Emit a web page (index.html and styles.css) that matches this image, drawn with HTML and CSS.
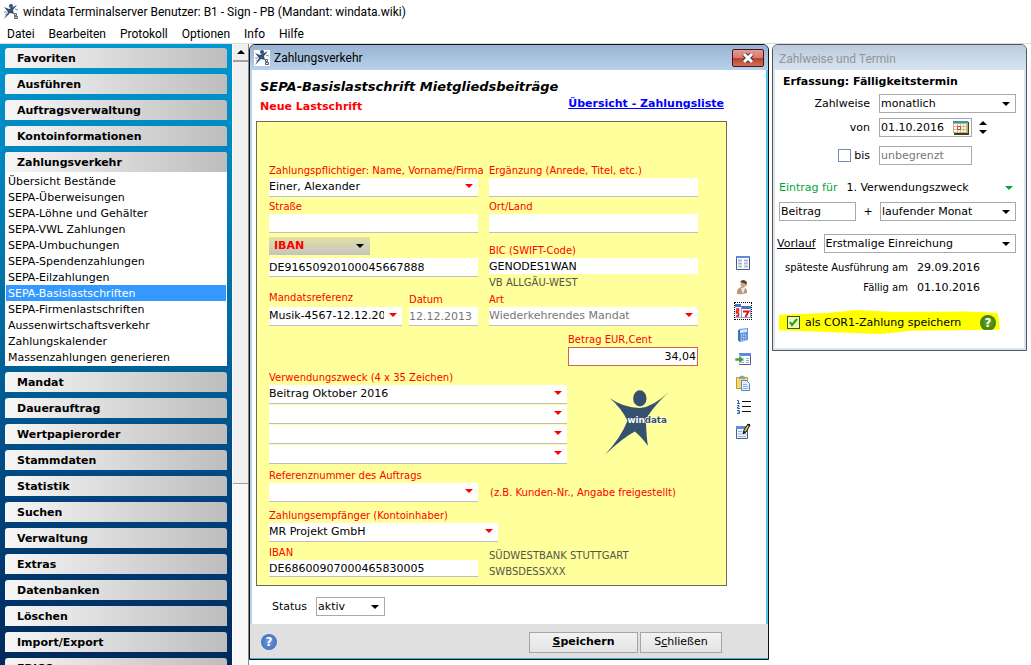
FILE: index.html
```html
<!DOCTYPE html>
<html lang="de">
<head>
<meta charset="utf-8">
<title>windata Terminalserver</title>
<link rel="stylesheet" href="styles.css">
</head>
<body>
<svg class="defs" aria-hidden="true">
  <symbol id="man" viewBox="370 55 200 200">
    <ellipse cx="480" cy="83" rx="20" ry="24"/>
    <path d="M390 82Q430 111 480 112Q522 107 567 63Q506 122 498 150Q500 200 504 225Q485 198 465 182Q430 200 375 252Q424 200 443 150Q425 112 390 82Z"/>
  </symbol>
  <symbol id="app" viewBox="0 0 16 16">
    <path d="M1 3L6 5L14 1L10 6L11 10L7 9L1 15L5 8Z" fill="#36506f"/>
    <circle cx="8" cy="2" r="2" fill="#36506f"/>
    <path d="M1 8h3M2 11l3-2M12 5l3 1" stroke="#7f94aa"/>
    <path d="M11.500 9.500h2v2h-2zM11.500 12.500h3v2h-3z" fill="#dce8ee" stroke="#50666f"/>
  </symbol>
</svg>

<header class="titlebar">
  <svg class="app-icon"><use href="#app"/></svg>
  <span>windata Terminalserver Benutzer: B1 - Sign - PB (Mandant: windata.wiki)</span>
</header>
<nav class="menubar">
  <button>Datei</button><button>Bearbeiten</button><button>Protokoll</button><button>Optionen</button><button>Info</button><button>Hilfe</button>
</nav>

<main class="main">
  <aside class="sidebar">
    <button class="group">Favoriten</button>
    <button class="group">Ausführen</button>
    <button class="group">Auftragsverwaltung</button>
    <button class="group">Kontoinformationen</button>
    <section class="open">
      <button class="group">Zahlungsverkehr</button>
      <ul class="links">
        <li><a href="#">Übersicht Bestände</a></li>
        <li><a href="#">SEPA-Überweisungen</a></li>
        <li><a href="#">SEPA-Löhne und Gehälter</a></li>
        <li><a href="#">SEPA-VWL Zahlungen</a></li>
        <li><a href="#">SEPA-Umbuchungen</a></li>
        <li><a href="#">SEPA-Spendenzahlungen</a></li>
        <li><a href="#">SEPA-Eilzahlungen</a></li>
        <li><a href="#" class="current">SEPA-Basislastschriften</a></li>
        <li><a href="#">SEPA-Firmenlastschriften</a></li>
        <li><a href="#">Aussenwirtschaftsverkehr</a></li>
        <li><a href="#">Zahlungskalender</a></li>
        <li><a href="#">Massenzahlungen generieren</a></li>
      </ul>
    </section>
    <button class="group">Mandat</button>
    <button class="group">Dauerauftrag</button>
    <button class="group">Wertpapierorder</button>
    <button class="group">Stammdaten</button>
    <button class="group">Statistik</button>
    <button class="group">Suchen</button>
    <button class="group">Verwaltung</button>
    <button class="group">Extras</button>
    <button class="group">Datenbanken</button>
    <button class="group">Löschen</button>
    <button class="group">Import/Export</button>
    <button class="group">EBICS</button>
  </aside>
  <div class="scrollbar">
    <button class="scroll-up" aria-label="Nach oben"></button>
    <div class="thumb"></div>
  </div>

  <div class="workspace">
    <section class="dialog">
      <header class="dialog-title">
        <svg class="app-icon boxed"><use href="#app"/></svg>
        <span>Zahlungsverkehr</span>
        <button class="close" aria-label="Fenster schließen">
          <svg width="12" height="10" viewBox="0 0 12 10"><path d="M2 1L10 9M10 1L2 9" stroke="#54303a" stroke-width="5"/><path d="M2 1L10 9M10 1L2 9" stroke="#fff" stroke-width="3"/></svg>
        </button>
      </header>
      <div class="dialog-head">
        <div>
          <h1>SEPA-Basislastschrift Mietgliedsbeiträge</h1>
          <p class="new">Neue Lastschrift</p>
        </div>
        <a href="#" class="overview">Übersicht - Zahlungsliste</a>
      </div>

      <div class="dialog-body">
        <form class="form">
          <div class="pair">
            <div class="field"><label for="name">Zahlungspflichtiger: Name, Vorname/Firma</label><select id="name" class="line"><option>Einer, Alexander</option></select></div>
            <div class="field"><label for="erg">Ergänzung (Anrede, Titel, etc.)</label><input id="erg" class="line"></div>
          </div>
          <div class="pair">
            <div class="field"><label for="str">Straße</label><input id="str" class="line"></div>
            <div class="field"><label for="ort">Ort/Land</label><input id="ort" class="line"></div>
          </div>
          <div class="pair bank">
            <div class="field"><select class="kind" aria-label="Kontoart"><option>IBAN</option></select><input class="line" aria-label="IBAN" value="DE91650920100045667888"></div>
            <div class="field bic"><label for="bic">BIC (SWIFT-Code)</label><input id="bic" class="line plain" value="GENODES1WAN"><span class="info">VB ALLGÄU-WEST</span></div>
          </div>
          <div class="pair mandate">
            <div class="split">
              <div class="field ref"><label for="ref">Mandatsreferenz</label><select id="ref" class="line"><option>Musik-4567-12.12.2013</option></select></div>
              <div class="field date"><label for="dat">Datum</label><input id="dat" class="line muted" value="12.12.2013"></div>
            </div>
            <div class="field"><label for="art">Art</label><select id="art" class="line muted"><option>Wiederkehrendes Mandat</option></select></div>
          </div>
          <div class="amount field"><label for="betrag">Betrag EUR,Cent</label><input id="betrag" value="34,04"></div>
          <div class="purpose">
            <div class="field lines">
              <label for="vz">Verwendungszweck (4 x 35 Zeichen)</label>
              <select id="vz" class="line"><option>Beitrag Oktober 2016</option></select>
              <select class="line" aria-label="Zeile 2"><option></option></select>
              <select class="line" aria-label="Zeile 3"><option></option></select>
              <select class="line" aria-label="Zeile 4"><option></option></select>
            </div>
            <svg class="logo" viewBox="370 55 200 200" role="img" aria-label="windata">
              <use href="#man" x="370" y="55" width="200" height="200" fill="#36506f"/>
              <text x="443" y="158"><tspan class="win">win</tspan><tspan>data</tspan></text>
            </svg>
          </div>
          <div class="pair">
            <div class="field"><label for="nr">Referenznummer des Auftrags</label><select id="nr" class="line"><option></option></select></div>
            <p class="hint">(z.B. Kunden-Nr., Angabe freigestellt)</p>
          </div>
          <div class="field owner"><label for="inh">Zahlungsempfänger (Kontoinhaber)</label><select id="inh" class="line"><option>MR Projekt GmbH</option></select></div>
          <div class="pair last">
            <div class="field"><label for="iban2">IBAN</label><input id="iban2" class="line low" value="DE68600907000465830005"></div>
            <p class="info">SÜDWESTBANK STUTTGART<br>SWBSDESSXXX</p>
          </div>
        </form>

        <div class="tools">
          <button aria-label="Tabelle"><svg viewBox="0 0 16 16"><path d="M1.500 1.500h13v13h-13z" fill="#fff" stroke="#41597f"/><path d="M1 1h14v2H1z" fill="#5d8be0"/><path d="M3 5.500h4M3 8.500h4M3 11.500h4M9 5.500h4M9 8.500h4M9 11.500h4" stroke="#a9bbd4" stroke-width="2"/></svg></button>
          <button aria-label="Person"><svg viewBox="0 0 16 16"><path d="M2 15q-1-5 4-7q7 0 6 6q-5 2-10 1z" fill="#b99b78"/><path d="M6 9l2 6 2-6z" fill="#eee"/><ellipse cx="8" cy="5" rx="2.500" ry="3.500" fill="#d9a57a"/><path d="M5 3q3-4 7 0l-1 5q0-4-3-4z" fill="#5b4434"/></svg></button>
          <button aria-label="Kalender" class="focus"><svg viewBox="0 0 16 16"><path d="M0 3h16v12H0z" fill="#fff"/><path d="M0 1h6v3H0zM6 3h10v3H6z" fill="#4873c4"/><path d="M6.500 4v11M15.500 5v10M0 14.500h16" stroke="#88a4d4"/><path d="M1 6h2.500v2H1.500v2h2v3H1" fill="none" stroke="#e8141c" stroke-width="1.500"/><path d="M8 8.500h5.500L10.500 14" fill="none" stroke="#e8141c" stroke-width="2"/></svg></button>
          <button aria-label="Rechner"><svg viewBox="0 0 16 16"><path d="M4 2l9-1v12l-8 2-2-2z" fill="#6896dc"/><path d="M5 3l7-1v3l-7 1z" fill="#d2e8ff"/><path d="M6 8h6M6 10.500h6M6 13h5" stroke="#dceaff" stroke-dasharray="1 1"/><path d="M3 3v10l2 2V3z" fill="#3e6fbd"/></svg></button>
          <button aria-label="Einfügen in Tabelle"><svg viewBox="0 0 16 16"><path d="M4.500 2.500h11v11h-11z" fill="#fff" stroke="#48618c"/><path d="M4 2h12v3H4z" fill="#5d8be0"/><path d="M6 7.500h3M11 7.500h3M6 9.500h3M11 9.500h3M6 11.500h3M11 11.500h3" stroke="#9eb2d0"/><path d="M0 7h4V4l5 4.500L4 13v-3H0z" fill="#4b9c48" stroke="#fff" stroke-width=".6"/></svg></button>
          <button aria-label="Zwischenablage"><svg viewBox="0 0 16 16"><path d="M1.500 2.500h11v11h-11z" fill="#f5d86b" stroke="#c49a29"/><path d="M4 2q3-3 6 0v2H4z" fill="#8ba0bd"/><path d="M6.500 5.500h5l3 3v7h-8z" fill="#e4f0ff" stroke="#5a85c5"/><path d="M8 9.500h4M8 11.500h5M8 13.500h5" stroke="#8fb1e3"/></svg></button>
          <button aria-label="Nummerierte Liste"><svg viewBox="0 0 16 16"><path d="M7 2.500h9M7 7.500h9M7 12.500h9" stroke="#111"/><path d="M2 1.500h1.500V4M2 4.500h3M2 6.500h2V8H2.500v1.500H5M2 11.500h2.500v3H2M2.500 13h2" fill="none" stroke="#3562ad"/></svg></button>
          <button aria-label="Notiz bearbeiten"><svg viewBox="0 0 16 16"><path d="M1.500 3.500h11v12h-11z" fill="#eef4ff" stroke="#48618c"/><path d="M1 3h12v3H1z" fill="#5d8be0"/><path d="M3 8.500h4M3 11h4M9 11h3M3 13.500h8" stroke="#9eb2d0"/><path d="M8 11l1-4 4-6 2 1-4 7z" fill="#e8c53c" stroke="#111"/><path d="M8 11l1-3 2 1zM12 1h3v3z" fill="#111"/></svg></button>
        </div>
      </div>

      <div class="status"><label for="status">Status</label><select id="status" class="box"><option>aktiv</option></select></div>
      <footer class="dialog-foot">
        <button class="help blue" aria-label="Hilfe">?</button>
        <button class="btn main-btn"><span><u>S</u>peichern</span></button>
        <button class="btn"><span>S<u>c</u>hließen</span></button>
      </footer>
    </section>

    <section class="panel">
      <header class="panel-title">Zahlweise und Termin</header>
      <form class="panel-body">
        <h2>Erfassung: Fälligkeitstermin</h2>
        <div class="grid">
          <label for="zw">Zahlweise</label><select id="zw" class="box"><option>monatlich</option></select>
          <label for="von">von</label>
          <div class="from">
            <div class="datebox"><input id="von" value="01.10.2016"><svg width="16" height="14" viewBox="0 0 16 14"><path d="M1 1h15v13H1z" fill="#3d3c20"/><path d="M0 0h15v12H0z" fill="#bdb878"/><path d="M0 0h15v2H0z" fill="#3f8fbd"/><path d="M1 3h12v8H1z" fill="#fffbe0"/><path d="M1 5.500h12M1 8.500h12M4.500 3v8M7.500 3v8M10.500 3v8" stroke="#c9c48c"/><path d="M4.500 5.500h3v3h-3z" fill="#fff" stroke="#d03078"/></svg></div>
            <svg width="8" height="13" viewBox="0 0 8 13"><path d="M0 4h8L4 0zM0 9h8l-4 4z"/></svg>
          </div>
          <label for="bis" class="until"><input type="checkbox" class="check" aria-label="bis begrenzen">bis</label><input id="bis" class="box short muted" value="unbegrenzt">
        </div>
        <div class="entry"><label for="ein">Eintrag für</label><select id="ein"><option>1. Verwendungszweck</option></select></div>
        <div class="plus"><input class="box" aria-label="Text" value="Beitrag"><span>+</span><select class="box" aria-label="Zeitraum"><option>laufender Monat</option></select></div>
        <div class="lead"><label for="vor">Vorlauf</label><select id="vor" class="box"><option>Erstmalige Einreichung</option></select></div>
        <dl class="dates"><dt>späteste Ausführung am</dt><dd>29.09.2016</dd><dt>Fällig am</dt><dd>01.10.2016</dd></dl>
        <div class="cor">
          <input type="checkbox" id="cor" class="check" checked><label for="cor">als COR1-Zahlung speichern</label>
          <button type="button" class="help green" aria-label="Hilfe">?</button>
        </div>
      </form>
    </section>
  </div>
</main>
</body>
</html>
```
FILE: styles.css
```css
* { box-sizing: border-box; }
body {
  margin: 0;
  height: 100vh;
  display: flex;
  flex-direction: column;
  overflow: hidden;
  background: #fff;
  color: #000;
  font: 11px/14px "DejaVu Sans", sans-serif;
}
button, input, select { font: inherit; color: inherit; border: 0; border-radius: 0; padding: 0; margin: 0; background: none; outline: 0; }
select { appearance: none; }
h1, h2, p, ul, dl, dd { margin: 0; padding: 0; }
.defs { position: absolute; width: 0; height: 0; }

.titlebar { display: flex; align-items: center; gap: 4px; height: 24px; padding-left: 3px; font: 12px/16px Roboto, sans-serif; white-space: nowrap; }
.app-icon { width: 16px; height: 16px; flex: none; }
.app-icon.boxed { background: #fff; }
.menubar { display: flex; gap: 14px; height: 19px; padding-left: 7px; font: 12px/18px Roboto, sans-serif; }

.main { flex: 1; min-height: 0; display: flex; border-top: 1px solid #ddd; }
.sidebar { flex: 0 0 232px; overflow: hidden; display: flex; flex-direction: column; gap: 6px; padding: 4px 5px 0; background: linear-gradient(#0097cf, #0071a8 40%, #00417a 75%, #002a5c); }
.sidebar > * { flex: none; }
.group { width: 222px; height: 20px; padding: 2px 0 0 12px; text-align: left; font-weight: bold; background: linear-gradient(90deg, #f6f6f6, #bdbdbd); border-radius: 3px 3px 0 0; }
.open { width: 222px; background: #fff; border-radius: 3px 3px 0 0; }
.open .group { display: block; }
.links { list-style: none; border: 1px solid #fff; }
.links a { display: block; height: 16px; padding: 1px 0 0 2px; line-height: 16px; color: #000; text-decoration: none; }
.links .current { background: #3399ff; color: #fff; }

.scrollbar { flex: 0 0 17px; display: flex; flex-direction: column; border-left: 1px solid #fff; border-right: 1px solid #888; background: #f8f8f8; }
.scroll-up { height: 18px; background: #f0f0f0; border-bottom: 2px solid #a0a0a0; display: flex; justify-content: center; align-items: center; }
.scroll-up::before { content: ""; border: solid transparent; border-width: 0 4px 4px; border-bottom-color: #000; }
.thumb { height: 422px; background: #f0f0f0; border-bottom: 1px solid #a0a0a0; }

.workspace { flex: 1; display: flex; align-items: flex-start; gap: 3px; }
.dialog { width: 520px; border: 1px solid #111; border-radius: 6px 6px 0 0; background: #fff; overflow: hidden; background: linear-gradient(90deg, #bcd4ea 2px, #fff 2px calc(100% - 2px), #55c8f0 calc(100% - 2px)); }
.dialog-title { display: flex; align-items: center; gap: 4px; height: 25px; padding: 0 4px 0 4px; background: linear-gradient(#98b3d1, #b9d1ea); font: 12px/16px Roboto, sans-serif; }
.close { display: flex; align-items: center; justify-content: center; margin-left: auto; width: 32px; height: 18px; border: 1px solid #431422; border-radius: 2px; background: linear-gradient(#e39a90, #d6796c 50%, #b83e2c 50%, #d0705a); }
.dialog-head { display: flex; justify-content: space-between; padding: 9px 44px 0 10px; height: 51px; }
h1 { font: italic bold 13px/16px "DejaVu Sans", sans-serif; white-space: nowrap; }
.new { margin-top: 5px; color: #f00; font-weight: bold; }
.overview { margin: 18px 0 0 -60px; height: 15px; font-weight: bold; color: #00f; white-space: nowrap; }

.dialog-body { display: flex; padding-left: 6px; }
.form { flex: 0 0 471px; height: 465px; padding: 42px 28px 0 12px; border: 1px solid #6b6b5c; background: #ffff9b; }
.pair { display: grid; grid-template-columns: 1fr 1fr; column-gap: 11px; margin-bottom: 3px; }
.field { display: flex; flex-direction: column; min-width: 0; }
.field label { height: 14px; line-height: 14px; font-size: 10px; color: #f00; white-space: nowrap; }
.line { width: 100%; height: 19px; background-color: #fff; border-bottom: 1px solid #bfbfbf; }
select.line { padding-right: 18px; background: #fff url("data:image/svg+xml,%3Csvg xmlns='http://www.w3.org/2000/svg' width='8' height='4'%3E%3Cpath d='M0 0h8L4 4z' fill='red'/%3E%3C/svg%3E") no-repeat right 5px top 6px; }
.plain { height: 16px; border: 0; }
.muted { color: #777; }
.kind { width: 101px; height: 18px; margin: 1px 0 3px; padding-left: 5px; color: #f00; font-weight: bold; background: url("data:image/svg+xml,%3Csvg xmlns='http://www.w3.org/2000/svg' width='8' height='4'%3E%3Cpath d='M0 0h8L4 4z'/%3E%3C/svg%3E") no-repeat right 6px center, linear-gradient(#e3e2a6, #c3c3c3); }
.bic { padding-top: 8px; }
.info { color: #555547; font-size: 10px; line-height: 16px; }
.bic .info { margin-top: 1px; }
.mandate { margin: -3px 0 7px; align-items: end; }
.split { display: flex; align-items: flex-end; gap: 7px; }
.ref { flex: 1; gap: 2px; }
.date { flex: 0 0 69px; }
.amount { width: 130px; margin-left: auto; }
.amount input { height: 19px; border: 1px solid #d9604a; background: #fff; text-align: right; padding-right: 1px; }
.purpose { display: flex; gap: 36px; margin: 5px 0; }
.lines { flex: 0 0 298px; gap: 1px; }
.lines label { margin-bottom: -1px; }
.logo { width: 67px; height: 67px; margin-top: 18px; font: bold 26px "DejaVu Sans", sans-serif; fill: #36506f; }
.logo text { stroke: #ffffe0; stroke-width: 4px; paint-order: stroke; }
.logo .win { fill: #fff; stroke: none; }
.hint { padding: 17px 0 0 1px; color: #f00; font-size: 10px; white-space: nowrap; }
.owner { width: 229px; margin: 7px 0 4px; }
.last { margin: 0; }
.low { height: 17px; }
.last .info { padding-top: 2px; }
.tools { display: flex; flex-direction: column; gap: 8px; padding: 134px 0 0 8px; }
.tools button, .tools svg { display: block; width: 16px; height: 16px; }
.focus { outline: 1px dotted #000; }

.status { display: flex; align-items: center; gap: 9px; height: 38px; padding: 3px 0 0 22px; }
.box { width: 100%; height: 19px; padding: 0 1px; border: 1px solid #a9a9a9; background-color: #fff; }
select.box { background: #fff url("data:image/svg+xml,%3Csvg xmlns='http://www.w3.org/2000/svg' width='8' height='4'%3E%3Cpath d='M0 0h8L4 4z'/%3E%3C/svg%3E") no-repeat right 5px center; }
.status .box { width: 69px; }
.dialog-foot { display: flex; align-items: center; gap: 2px; height: 35px; padding: 2px 46px 0 11px; background: #e0e0e0; border-bottom: 1px solid #20c0e8; }
.btn { width: 82px; height: 21px; border: 1px solid #a5a5a5; background: linear-gradient(#f2f2f2, #e4e4e4); }
.main-btn { width: 109px; margin-left: auto; font-weight: bold; }
.help { width: 16px; height: 16px; border-radius: 8px; color: #fff; font-size: 12px; font-weight: bold; line-height: 16px; text-align: center; }
.blue { background: radial-gradient(#6d9ae0, #3365b8); }
.green { background: radial-gradient(#69a81c, #2d6d00); }

.panel { width: 255px; min-height: 307px; padding: 0 2px 2px; border: 1px solid #555; border-radius: 6px 6px 0 0; background: #dae5f2; overflow: hidden; }
.panel-title { height: 25px; padding: 6px 6px 0; margin: 0 -2px; background: linear-gradient(#bccbdc, #d8e4f0); color: #9096a0; font: 12px/16px Roboto, sans-serif; }
.panel-body { height: 278px; padding: 5px 8px 0 4px; background: #fff; }
h2 { padding-left: 4px; font: bold 11px/14px "DejaVu Sans", sans-serif; }
.grid { display: grid; grid-template-columns: 91px 1fr; column-gap: 9px; row-gap: 5px; align-items: center; margin-top: 5px; }
.grid > label { text-align: right; }
.from { display: flex; align-items: center; gap: 7px; }
.datebox { display: flex; align-items: center; width: 93px; height: 19px; padding: 0 2px 0 1px; border: 1px solid #a9a9a9; }
.datebox input { flex: 1; min-width: 0; }
.short { width: 93px; margin-top: 4px; }
.grid > .until { display: flex; align-items: center; justify-content: flex-end; gap: 3px; padding-top: 4px; }
.check { appearance: none; width: 13px; height: 13px; border: 1px solid #6f8fb5; background: #fff; flex: none; }
.check:checked { border-color: #2f5a10; background: #f2f7b8 url("data:image/svg+xml,%3Csvg xmlns='http://www.w3.org/2000/svg' width='9' height='9'%3E%3Cpath d='M1 4l2 3 5-6' fill='none' stroke='%2321a121' stroke-width='2'/%3E%3C/svg%3E") no-repeat center; }
.entry { display: flex; align-items: center; gap: 9px; margin-top: 14px; height: 18px; color: #00a933; }
.entry select { flex: 1; color: #000; background: url("data:image/svg+xml,%3Csvg xmlns='http://www.w3.org/2000/svg' width='8' height='4'%3E%3Cpath d='M0 0h8L4 4z' fill='%2300a933'/%3E%3C/svg%3E") no-repeat right 3px center; }
.plus { display: grid; grid-template-columns: 77px 24px 1fr; align-items: center; margin: 5px 0 13px; text-align: center; }
.lead { display: flex; align-items: center; gap: 8px; margin-left: -2px; }
.lead label { text-decoration: underline; }
.lead .box { flex: 1; }
.dates { display: grid; grid-template-columns: 129px 1fr; column-gap: 9px; margin-top: 5px; line-height: 20px; font-size: 10px; }
.dates dt { text-align: right; white-space: nowrap; }
.dates dd { font-size: 11px; }
.cor { display: flex; align-items: center; width: 221px; height: 24px; margin: 12px 0 0; padding: 1px 0 0 8px; background: #ff0; clip-path: polygon(0 20%, 22% 12%, 35% 0, 52% 8%, 85% 6%, 99% 12%, 100% 82%, 60% 86%, 46% 100%, 0 84%); }
.cor label { margin-left: 5px; white-space: nowrap; }
.cor .help { margin: 0 4px 0 auto; }
```
